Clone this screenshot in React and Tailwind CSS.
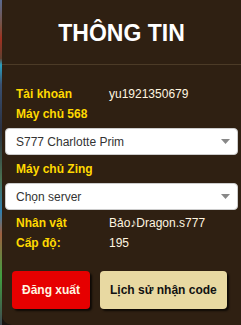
import React from "react";

function Select({ text }) {
  return (
    <div className="mx-[3px] flex h-[27px] items-center justify-between rounded-[4px] border border-[#ccc] bg-white pl-[10px] pr-[7px] text-[12px] text-[#333]">
      <span>{text}</span>
      <svg width="9" height="5" viewBox="0 0 9 5">
        <polygon points="0,0 9,0 4.5,5" fill="#888" />
      </svg>
    </div>
  );
}

function Row({ label, value }) {
  return (
    <div className="flex h-5 items-center pl-[14px] text-[12px]">
      <span className="w-[93px] font-bold text-[#ffd800]">{label}</span>
      {value && <span className="text-[#fff6e0]">{value}</span>}
    </div>
  );
}

export default function App() {
  return (
    <div
      className="flex h-[325px] w-[241px] bg-[#1a1410]"
      style={{ fontFamily: '"Liberation Sans", Arial, sans-serif' }}
    >
      <div className="w-[2px] bg-[linear-gradient(to_bottom,#5a6a90_0%,#7a5040_8%,#a03020_12%,#604030_18%,#2aa0c0_20%,#3a5070_26%,#2a3040_40%,#4a7050_55%,#3080b0_65%,#a06040_72%,#40a040_85%,#404850_100%)]" />
      <div className="flex flex-1 flex-col rounded-bl-[10px] bg-[#2f2012]">
        <div className="flex h-[64px] items-center justify-center pt-[2px] text-[23px] font-bold text-white">
          THÔNG TIN
        </div>
        <div className="h-px bg-[#4c3b27]" />
        <div className="pt-[19px]">
          <Row label="Tài khoản" value="yu1921350679" />
          <Row label="Máy chủ 568" />
          <div className="mt-[4px]">
            <Select text="S777 Charlotte Prim" />
          </div>
          <div className="mt-[4px]">
            <Row label="Máy chủ Zing" />
          </div>
          <div className="mt-[4px]">
            <Select text="Chọn server" />
          </div>
          <div className="mt-[3px]">
            <Row label="Nhân vật" value="Bảo♪Dragon.s777" />
            <Row label="Cấp độ:" value="195" />
          </div>
          <div className="mt-[18px] flex gap-[10px] pl-[10px]">
            <button className="h-[38px] rounded-[4px] bg-[#e60000] px-[10px] text-[12px] font-bold text-[#fff6e0] shadow-[2px_2px_2px_rgba(0,0,0,0.7)]">
              Đăng xuất
            </button>
            <button className="h-[38px] rounded-[4px] bg-[#e8d9a2] px-[10px] text-[12px] font-bold text-[#111] shadow-[2px_2px_2px_rgba(0,0,0,0.7)]">
              Lịch sử nhận code
            </button>
          </div>
        </div>
      </div>
    </div>
  );
}
